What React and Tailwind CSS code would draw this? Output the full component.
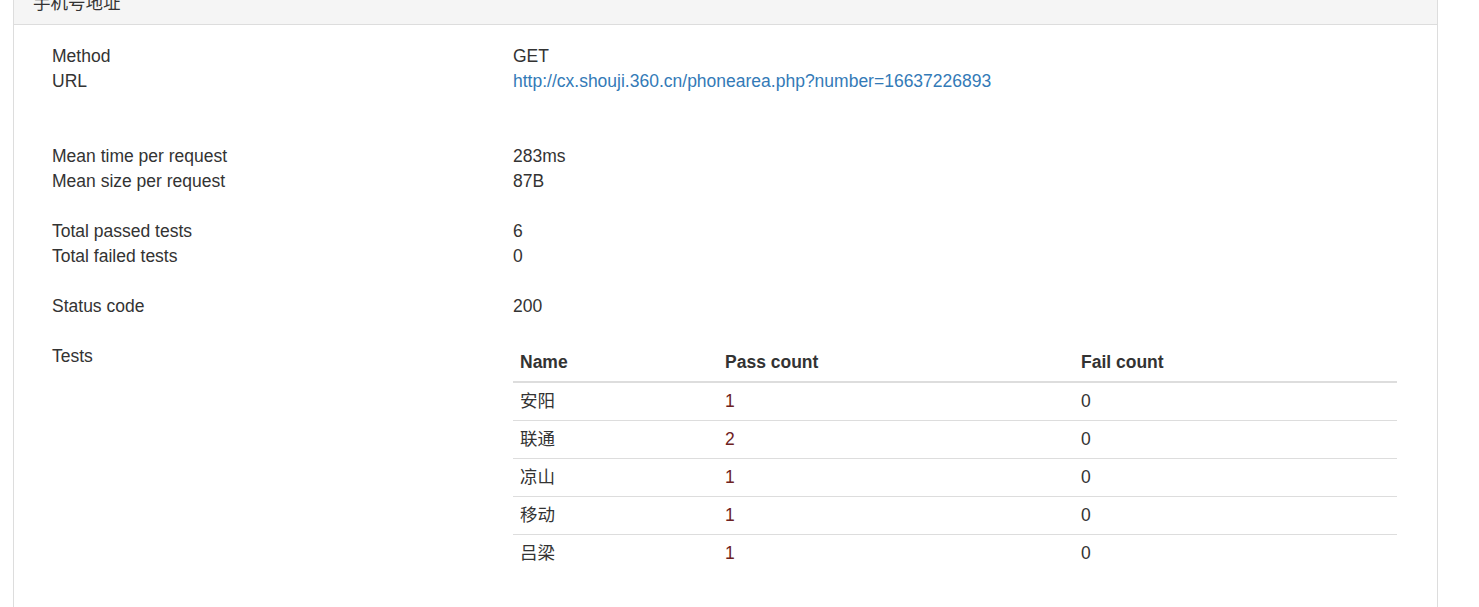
const rows = [
  { name: '安阳', pass: 1, fail: 0 },
  { name: '联通', pass: 2, fail: 0 },
  { name: '凉山', pass: 1, fail: 0 },
  { name: '移动', pass: 1, fail: 0 },
  { name: '吕梁', pass: 1, fail: 0 },
];

const Line = ({ label, children }) => (
  <div className="flex leading-[25px]">
    <div className="w-[461px] shrink-0">{label}</div>
    <div>{children}</div>
  </div>
);

const App = () => {
  return (
    <div
      className="h-[607px] overflow-hidden bg-white text-[17.5px] text-[#333]"
      style={{ fontFamily: '"Liberation Sans", Arial, "Noto Sans CJK SC", sans-serif' }}
    >
      <div className="ml-[13px] w-[1425px] -mt-[19px] border border-[#ddd] bg-white">
        {/* Panel heading */}
        <div className="bg-[#f5f5f5] border-b border-[#ddd] pl-[19px] pt-[10px] pb-[10px] leading-[22px]">
          手机号地址
        </div>

        {/* Panel body */}
        <div className="pl-[38px] pr-[39px] pt-[19px] pb-10">
          <Line label="Method">GET</Line>
          <Line label="URL">
            <a className="text-[#337ab7]" href="#">http://cx.shouji.360.cn/phonearea.php?number=16637226893</a>
          </Line>
          <div className="h-[50px]" />
          <Line label="Mean time per request">283ms</Line>
          <Line label="Mean size per request">87B</Line>
          <div className="h-[25px]" />
          <Line label="Total passed tests">6</Line>
          <Line label="Total failed tests">0</Line>
          <div className="h-[25px]" />
          <Line label="Status code">200</Line>
          <div className="h-[25px]" />

          <div className="flex">
            <div className="w-[461px] shrink-0 leading-[25px]">Tests</div>
            <table className="w-[884px] table-fixed border-collapse">
              <thead>
                <tr className="border-b-2 border-[#ddd]">
                  <th className="w-[205px] px-[7px] py-[8px] text-left font-bold leading-[21px]">Name</th>
                  <th className="w-[356px] px-[7px] py-[8px] text-left font-bold leading-[21px]">Pass count</th>
                  <th className="px-[7px] py-[8px] text-left font-bold leading-[21px]">Fail count</th>
                </tr>
              </thead>
              <tbody>
                {rows.map((r, i) => (
                  <tr key={r.name} className={i > 0 ? 'border-t border-[#ddd]' : ''}>
                    <td className="px-[7px] py-[8px] leading-[21px]">{r.name}</td>
                    <td className="px-[7px] py-[8px] leading-[21px] text-[#6e2222]">{r.pass}</td>
                    <td className="px-[7px] py-[8px] leading-[21px]">{r.fail}</td>
                  </tr>
                ))}
              </tbody>
            </table>
          </div>
        </div>
      </div>
    </div>
  );
};

export default App;
